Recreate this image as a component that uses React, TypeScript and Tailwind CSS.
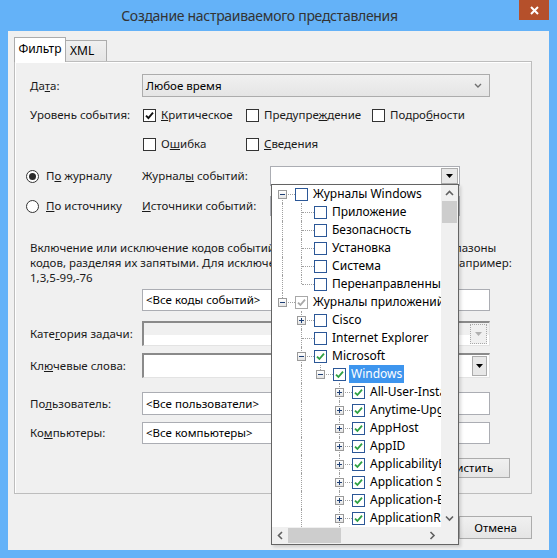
import React from "react";

type Conn = "first" | "mid" | "last";
type TreeItem = {
  guides: boolean[];
  conn: Conn;
  exp?: "+" | "-";
  check: "none" | "green" | "gray";
  text: string;
  selected?: boolean;
};

const tree: TreeItem[] = [
  { guides: [], conn: "first", exp: "-", check: "none", text: "Журналы Windows" },
  { guides: [true], conn: "mid", check: "none", text: "Приложение" },
  { guides: [true], conn: "mid", check: "none", text: "Безопасность" },
  { guides: [true], conn: "mid", check: "none", text: "Установка" },
  { guides: [true], conn: "mid", check: "none", text: "Система" },
  { guides: [true], conn: "last", check: "none", text: "Перенаправленные события" },
  { guides: [], conn: "last", exp: "-", check: "gray", text: "Журналы приложений и служб" },
  { guides: [false], conn: "mid", exp: "+", check: "none", text: "Cisco" },
  { guides: [false], conn: "mid", check: "none", text: "Internet Explorer" },
  { guides: [false], conn: "mid", exp: "-", check: "green", text: "Microsoft" },
  { guides: [false, true], conn: "last", exp: "-", check: "green", text: "Windows", selected: true },
  { guides: [false, true, false], conn: "mid", exp: "+", check: "green", text: "All-User-Install-Agent" },
  { guides: [false, true, false], conn: "mid", exp: "+", check: "green", text: "Anytime-Upgrade" },
  { guides: [false, true, false], conn: "mid", exp: "+", check: "green", text: "AppHost" },
  { guides: [false, true, false], conn: "mid", exp: "+", check: "green", text: "AppID" },
  { guides: [false, true, false], conn: "mid", exp: "+", check: "green", text: "ApplicabilityEngine" },
  { guides: [false, true, false], conn: "mid", exp: "+", check: "green", text: "Application Server-Applications" },
  { guides: [false, true, false], conn: "mid", exp: "+", check: "green", text: "Application-Experience" },
  { guides: [false, true, false], conn: "mid", exp: "+", check: "green", text: "ApplicationResourceManagementSystem" },
];

function Tri({ color = "#000" }: { color?: string }) {
  return (
    <svg width="7" height="4" viewBox="0 0 7 4">
      <path d="M0 0H7L3.5 4Z" fill={color} />
    </svg>
  );
}

function Chev({ dir }: { dir: "up" | "down" | "left" | "right" }) {
  const d = {
    up: "M1 5L4.5 1.5L8 5",
    down: "M1 1.5L4.5 5L8 1.5",
    left: "M5 1L1.5 4.5L5 8",
    right: "M1.5 1L5 4.5L1.5 8",
  }[dir];
  const vertical = dir === "up" || dir === "down";
  return (
    <svg width={vertical ? 9 : 7} height={vertical ? 7 : 9} viewBox={vertical ? "0 0 9 7" : "0 0 7 9"}>
      <path d={d} stroke="#606060" strokeWidth="1.6" fill="none" />
    </svg>
  );
}

function Box({ checked }: { checked?: boolean }) {
  return (
    <span className="flex h-[13px] w-[13px] shrink-0 items-center justify-center border border-[#333] bg-white">
      {checked && (
        <svg width="9" height="9" viewBox="0 0 9 9">
          <path d="M1 4.6L3.4 7L8 1.6" stroke="#111" strokeWidth="1.9" fill="none" />
        </svg>
      )}
    </span>
  );
}

function Radio({ on }: { on?: boolean }) {
  return (
    <span className="flex h-[13px] w-[13px] shrink-0 items-center justify-center rounded-full border border-[#333] bg-white">
      {on && <span className="h-[7px] w-[7px] rounded-full bg-[#2a2a2a]" />}
    </span>
  );
}

function TreeCheck({ kind }: { kind: TreeItem["check"] }) {
  const gray = kind === "gray";
  return (
    <span
      className={
        "flex h-[13px] w-[13px] shrink-0 items-center justify-center border bg-white " +
        (gray ? "border-[#a8a8a8]" : "border-[#2b5797]")
      }
    >
      {kind !== "none" && (
        <svg width="9" height="9" viewBox="0 0 9 9">
          <path d="M1 4.6L3.4 7L8 1.6" stroke={gray ? "#a8a8a8" : "#2ea043"} strokeWidth="1.8" fill="none" />
        </svg>
      )}
    </span>
  );
}

function Expander({ sign }: { sign: "+" | "-" }) {
  return (
    <span className="absolute left-[5px] top-[5px] flex h-[9px] w-[9px] items-center justify-center border border-[#9a9a9a] bg-[linear-gradient(#ffffff,#e4e4e4)]">
      <span className="absolute h-px w-[5px] bg-[#1e3f75]" />
      {sign === "+" && <span className="absolute h-[5px] w-px bg-[#1e3f75]" />}
    </span>
  );
}

function TreeRow({ r }: { r: TreeItem }) {
  return (
    <div className="flex h-[18px] items-center whitespace-nowrap">
      {r.guides.map((g, i) => (
        <span key={i} className="relative h-full w-[19px] shrink-0">
          {g && <span className="absolute left-[9px] top-0 h-full border-l border-dotted border-[#a0a0a0]" />}
        </span>
      ))}
      <span className="relative h-full w-[22px] shrink-0">
        {r.conn === "first" && (
          <span className="absolute bottom-0 left-[9px] top-[9px] border-l border-dotted border-[#a0a0a0]" />
        )}
        {r.conn === "mid" && <span className="absolute bottom-0 left-[9px] top-0 border-l border-dotted border-[#a0a0a0]" />}
        {r.conn === "last" && <span className="absolute left-[9px] top-0 h-[9px] border-l border-dotted border-[#a0a0a0]" />}
        <span className="absolute left-[10px] top-[9px] w-[12px] border-t border-dotted border-[#a0a0a0]" />
        {r.exp && <Expander sign={r.exp} />}
      </span>
      <TreeCheck kind={r.check} />
      <span
        className={
          "ml-[3px] px-[2px] text-[12px] leading-[18px] " + (r.selected ? "bg-[#3d95ee] text-white" : "text-black")
        }
      >
        {r.text}
      </span>
    </div>
  );
}

function Input({ text }: { text?: string }) {
  return (
    <div className="flex h-full w-[348px] items-center border border-[#abadb3] bg-white pl-[3px] text-black">{text}</div>
  );
}

function Button({ children, w }: { children: React.ReactNode; w: string }) {
  return (
    <div
      className={
        "flex h-full items-center justify-center border border-[#acacac] bg-[linear-gradient(#f0f0f0,#e5e5e5)] text-black " + w
      }
    >
      {children}
    </div>
  );
}

export default function App() {
  return (
    <div className="relative flex h-[558px] w-[557px] flex-col overflow-hidden bg-[#64b2f8] font-['Noto_Sans','Open_Sans',sans-serif] text-[11.5px] text-[#1a1a1a]">
      {/* title bar */}
      <div className="flex h-[31px] shrink-0 items-start">
        <div className="flex h-[30px] flex-1 items-center justify-center text-[14px] tracking-[-0.3px] text-[#333]">
          Создание настраиваемого представления
        </div>
        <div className="mr-[8px] flex h-[20px] w-[30px] items-center justify-center bg-[#b5502b]">
          <svg width="9" height="9" viewBox="0 0 9 9">
            <path d="M1 1L8 8M8 1L1 8" stroke="#fff" strokeWidth="2" />
          </svg>
        </div>
      </div>

      {/* client */}
      <div className="relative mx-[8px] flex h-[519px] flex-col bg-[#f0f0f0]">
        {/* tabs */}
        <div className="relative z-10 ml-[6px] mt-[6px] flex h-[24px] items-end">
          <div className="-mb-px flex h-[25px] w-[52px] items-center justify-center border border-b-0 border-[#acacac] bg-white pb-[2px] text-[12px] text-black">
            Фильтр
          </div>
          <div className="flex h-[21px] w-[41px] items-center border border-b-0 border-l-0 border-[#acacac] bg-[linear-gradient(#f0f0f0,#e5e5e5)] pl-[4px] text-[12px] text-black">
            XML
          </div>
        </div>

        {/* panel */}
        <div className="ml-[6px] flex h-[433px] w-[518px] flex-col border border-[#bdbdbd] bg-[#f0f0f0] pl-[15px] pt-[12px] shadow-[inset_1px_1px_0_#fff]">
          <div className="flex h-[23px] items-center">
            <div className="w-[112px]">
              Да<u>т</u>а:
            </div>
            <div className="flex h-full w-[348px] items-center justify-between border border-[#acacac] bg-[linear-gradient(#f0f0f0,#e5e5e5)] pl-[3px] pr-[7px] text-black">
              <span>Любое время</span>
              <svg width="8" height="5" viewBox="0 0 8 5">
                <path d="M1 1L4 4L7 1" stroke="#707070" strokeWidth="1.4" fill="none" />
              </svg>
            </div>
          </div>

          <div className="mt-[8px] flex h-[20px] items-center">
            <div className="w-[112px]">Уровень события:</div>
            <div className="flex items-center pl-[1px]">
              <label className="flex w-[103px] items-center gap-[5px]">
                <Box checked />
                <span>
                  <u>К</u>ритическое
                </span>
              </label>
              <label className="flex w-[126px] items-center gap-[5px]">
                <Box />
                <span>
                  Предупре<u>ж</u>дение
                </span>
              </label>
              <label className="flex items-center gap-[5px]">
                <Box />
                <span>
                  Подро<u>б</u>ности
                </span>
              </label>
            </div>
          </div>

          <div className="mt-[9px] flex h-[20px] items-center">
            <div className="w-[112px]" />
            <div className="flex items-center pl-[1px]">
              <label className="flex w-[103px] items-center gap-[5px]">
                <Box />
                <span>
                  О<u>ш</u>ибка
                </span>
              </label>
              <label className="flex items-center gap-[5px]">
                <Box />
                <span>
                  <u>С</u>ведения
                </span>
              </label>
            </div>
          </div>

          <div className="-ml-[4px] mt-[12px] flex h-[20px] items-center">
            <label className="flex w-[116px] shrink-0 items-center gap-[7px]">
              <Radio on />
              <span>
                П<u>о</u> журналу
              </span>
            </label>
            <div className="w-[128px] shrink-0">
              Журнал<u>ы</u> событий:
            </div>
            <div className="flex h-full w-[190px] items-center justify-end border border-[#abadb3] bg-white pr-px">
              <div className="flex h-[16px] w-[17px] items-center justify-center border border-[#acacac] bg-[#e8e8e8]">
                <Tri />
              </div>
            </div>
          </div>

          <div className="-ml-[4px] mt-[10px] flex h-[20px] items-center">
            <label className="flex w-[116px] shrink-0 items-center gap-[7px]">
              <Radio />
              <span>
                <u>П</u>о источнику
              </span>
            </label>
            <div className="w-[128px] shrink-0">
              <u>И</u>сточники событий:
            </div>
            <div className="flex h-full w-[190px] items-center justify-end border border-[#abadb3] bg-white pr-px">
              <div className="flex h-[16px] w-[17px] items-center justify-center border border-[#acacac] bg-[#e8e8e8]">
                <Tri />
              </div>
            </div>
          </div>

          <div className="mt-[24px] w-[500px] overflow-hidden whitespace-nowrap leading-[15px]">
            <div>Включение или исключение кодов событий: введите номера кодов или диапазоны</div>
            <div>кодов, разделяя их запятыми. Для исключения кода введите знак минуса. Например:</div>
            <div>1,3,5-99,-76</div>
          </div>

          <div className="mt-[4px] flex h-[22px] items-center">
            <div className="w-[112px]" />
            <Input text="<Все коды событий>" />
          </div>

          <div className="mt-[10px] flex h-[25px] items-center">
            <div className="w-[112px]">
              Кате<u>г</u>ория задачи:
            </div>
            <div className="flex h-full w-[348px] items-center justify-end border-b border-l-2 border-r border-t-2 border-b-[#e3e3e3] border-l-[#8a8a8a] border-r-[#e3e3e3] border-t-[#8a8a8a] bg-[linear-gradient(#f0f0f0_0_55%,#fff_55%)] pr-[2px]">
              <div className="flex h-[20px] w-[17px] items-center justify-center border border-dotted border-[#a8a8a8] bg-[#f0f0f0]">
                <Tri color="#b0b0b0" />
              </div>
            </div>
          </div>

          <div className="mt-[7px] flex h-[25px] items-center">
            <div className="w-[112px]">
              Кл<u>ю</u>чевые слова:
            </div>
            <div className="flex h-full w-[348px] items-center justify-end border-b border-l-2 border-r border-t-2 border-b-[#e3e3e3] border-l-[#8a8a8a] border-r-[#e3e3e3] border-t-[#8a8a8a] bg-white pr-[2px]">
              <div className="flex h-[20px] w-[15px] items-center justify-center border border-[#acacac] bg-[#e8e8e8]">
                <Tri />
              </div>
            </div>
          </div>

          <div className="mt-[14px] flex h-[23px] items-center">
            <div className="w-[112px]">
              По<u>л</u>ьзователь:
            </div>
            <Input text="<Все пользователи>" />
          </div>

          <div className="mt-[7px] flex h-[22px] items-center">
            <div className="w-[112px]">
              Ко<u>м</u>пьютеры:
            </div>
            <Input text="<Все компьютеры>" />
          </div>

          <div className="mr-[21px] mt-[14px] flex h-[20px] justify-end">
            <Button w="w-[86px]">
              О<u>ч</u>истить
            </Button>
          </div>
        </div>

        {/* bottom buttons */}
        <div className="mr-[17px] mt-[22px] flex h-[23px] justify-end gap-[6px]">
          <Button w="w-[72px]">ОК</Button>
          <Button w="w-[73px]">Отмена</Button>
        </div>

        {/* dropdown tree popup */}
        <div className="absolute left-[263px] top-[153px] z-20 flex h-[361px] w-[188px] flex-col border border-[#646464] bg-white shadow-[2px_2px_3px_rgba(0,0,0,0.15)]">
          <div className="flex min-h-0 flex-1">
            <div className="min-w-0 flex-1 overflow-hidden pl-px">
              {tree.map((r, i) => (
                <TreeRow key={i} r={r} />
              ))}
            </div>
            <div className="flex w-[17px] shrink-0 flex-col bg-[#f0f0f0]">
              <div className="flex h-[16px] items-center justify-center">
                <Chev dir="up" />
              </div>
              <div className="mx-px h-[22px] bg-[#cdcdcd]" />
              <div className="flex-1" />
              <div className="flex h-[17px] items-center justify-center">
                <Chev dir="down" />
              </div>
            </div>
          </div>
          <div className="flex h-[17px] shrink-0">
            <div className="flex flex-1 items-center bg-[#f0f0f0]">
              <div className="flex h-full w-[16px] items-center justify-center">
                <Chev dir="left" />
              </div>
              <div className="my-px h-[15px] w-[53px] bg-[#cdcdcd]" />
              <div className="flex-1" />
              <div className="flex h-full w-[17px] items-center justify-center">
                <Chev dir="right" />
              </div>
            </div>
            <div className="w-[17px] bg-[#f0f0f0]" />
          </div>
        </div>
      </div>
    </div>
  );
}
